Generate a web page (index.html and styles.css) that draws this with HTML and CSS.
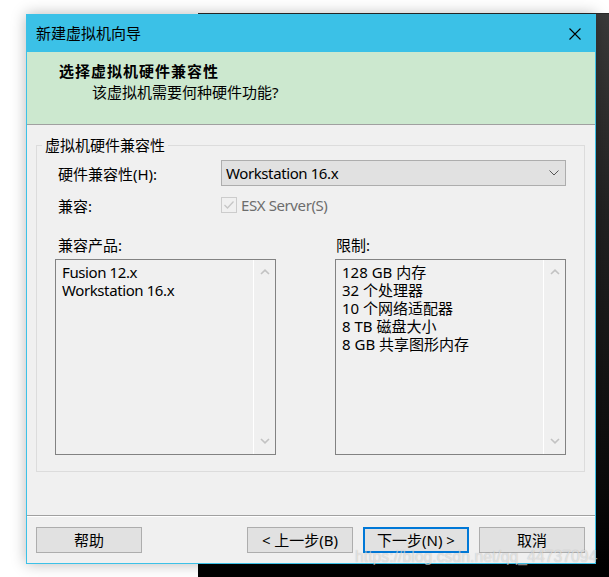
FILE: index.html
```html
<!DOCTYPE html>
<html lang="zh-CN">
<head>
<meta charset="utf-8">
<title>新建虚拟机向导</title>
<link rel="stylesheet" href="styles.css">
</head>
<body>
<div class="desk-window"></div>
<div class="dialog">
  <div class="titlebar">
    <span class="title">新建虚拟机向导</span>
    <svg class="close" width="12" height="12" viewBox="0 0 12 12"><path d="M0.5 0.5 L11.5 11.5 M11.5 0.5 L0.5 11.5" stroke="#000" stroke-width="1.1" fill="none"/></svg>
  </div>
  <div class="header">
    <div class="heading">选择虚拟机硬件兼容性</div>
    <div class="subheading">该虚拟机需要何种硬件功能?</div>
  </div>
  <div class="content">
    <fieldset class="group">
      <legend>虚拟机硬件兼容性</legend>
      <div class="group-body">
        <div class="row row-hw">
          <span class="label">硬件兼容性(H):</span>
          <div class="combo">
            <span class="latin">Workstation 16.x</span>
            <svg class="combo-arrow" width="10" height="6" viewBox="0 0 10 6"><path d="M0.5 0.5 L5 5 L9.5 0.5" stroke="#555" stroke-width="1" fill="none"/></svg>
          </div>
        </div>
        <div class="row row-compat">
          <span class="label">兼容:</span>
          <span class="check"><svg width="14" height="14" viewBox="0 0 14 14"><path d="M2.5 7 L5.5 10 L11.5 3.5" stroke="#c6c6c6" stroke-width="1.3" fill="none"/></svg></span>
          <span class="check-label latin">ESX Server(S)</span>
        </div>
        <div class="lists">
          <div class="col">
            <div class="col-label">兼容产品:</div>
            <div class="listbox">
              <div class="items">
                <div class="latin">Fusion 12.x</div>
                <div class="latin">Workstation 16.x</div>
              </div>
              <div class="scroll">
                <svg width="10" height="6" viewBox="0 0 10 6"><path d="M1 5 L5 1.2 L9 5" stroke="#c2c2c2" stroke-width="1.6" fill="none"/></svg>
                <svg width="10" height="6" viewBox="0 0 10 6"><path d="M1 1 L5 4.8 L9 1" stroke="#c2c2c2" stroke-width="1.6" fill="none"/></svg>
              </div>
            </div>
          </div>
          <div class="col col-right">
            <div class="col-label">限制:</div>
            <div class="listbox">
              <div class="items">
                <div>128 GB 内存</div>
                <div>32 个处理器</div>
                <div>10 个网络适配器</div>
                <div>8 TB 磁盘大小</div>
                <div>8 GB 共享图形内存</div>
              </div>
              <div class="scroll">
                <svg width="10" height="6" viewBox="0 0 10 6"><path d="M1 5 L5 1.2 L9 5" stroke="#c2c2c2" stroke-width="1.6" fill="none"/></svg>
                <svg width="10" height="6" viewBox="0 0 10 6"><path d="M1 1 L5 4.8 L9 1" stroke="#c2c2c2" stroke-width="1.6" fill="none"/></svg>
              </div>
            </div>
          </div>
        </div>
      </div>
    </fieldset>
  </div>
  <div class="footer">
    <button class="btn btn-help">帮助</button>
    <button class="btn">&lt; 上一步(B)</button>
    <button class="btn btn-default">下一步(N) &gt;</button>
    <button class="btn">取消</button>
  </div>
</div>
<div class="watermark">https://blog.csdn.net/qq_44737094</div>
</body>
</html>
```

FILE: styles.css
```css
html, body {
  margin: 0;
  padding: 0;
}
body {
  width: 609px;
  height: 577px;
  overflow: hidden;
  position: relative;
  background: #ffffff;
  font-family: "Noto Sans", "Noto Sans CJK SC", sans-serif;
  font-size: 15px;
  color: #000;
}
.latin {
  letter-spacing: -0.4px;
}
.desk-window {
  position: absolute;
  left: 198px;
  top: 13px;
  right: 0;
  bottom: 0;
  background: linear-gradient(#3a3a3a, #222 35%, #0a0a0a 85%, #000);
  border-top: 1px solid #2a2a2a;
}
.dialog {
  position: absolute;
  left: 26px;
  top: 14px;
  width: 570px;
  height: 550px;
  box-sizing: border-box;
  border: 1px solid #3bc1e7;
  background: #f0f0f0;
  display: flex;
  flex-direction: column;
  box-shadow: 0 0 14px rgba(0, 0, 0, 0.28);
}
.titlebar {
  height: 37px;
  flex: none;
  background: #3bc1e7;
  display: flex;
  align-items: center;
  justify-content: space-between;
  padding: 0 14px 0 9px;
}
.title {
  line-height: 37px;
}
.close {
  display: block;
}
.header {
  height: 72px;
  flex: none;
  box-sizing: border-box;
  background: #cce8cf;
  padding-top: 9px;
}
.heading {
  font-weight: bold;
  letter-spacing: 1px;
  line-height: 20px;
  padding-left: 32px;
}
.subheading {
  line-height: 20px;
  margin-top: 1px;
  padding-left: 65px;
}
.content {
  flex: 1;
  border-top: 1px solid #a0a0a0;
  padding: 10px 10px 0 9px;
}
.group {
  margin: 0;
  padding: 0;
  border: 1px solid #dcdcdc;
  min-width: 0;
}
.group legend {
  margin-left: 5px;
  padding: 0 3px;
  line-height: 20px;
}
.group-body {
  padding: 0 0 16px 18px;
}
.row {
  display: flex;
  align-items: center;
}
.label {
  width: 166px;
  box-sizing: border-box;
  padding-left: 3px;
  flex: none;
}
.row-hw {
  margin-top: 5px;
  height: 26px;
}
.combo {
  width: 345px;
  height: 26px;
  box-sizing: border-box;
  border: 1px solid #adadad;
  background: #e1e1e1;
  display: flex;
  align-items: center;
  justify-content: space-between;
  padding: 0 6px 0 4px;
}
.combo-arrow {
  display: block;
}
.row-compat {
  margin-top: 9px;
  height: 20px;
}
.check {
  width: 16px;
  height: 16px;
  box-sizing: border-box;
  border: 1px solid #cccccc;
  display: flex;
  align-items: center;
  justify-content: center;
}
.check svg {
  display: block;
}
.check-label {
  margin-left: 4px;
  color: #6d6d6d;
}
.lists {
  margin-top: 20px;
  display: grid;
  grid-template-columns: 221px 231px;
  column-gap: 59px;
}
.col-label {
  line-height: 20px;
  padding-left: 3px;
}
.col-right .col-label {
  padding-left: 1px;
}
.listbox {
  margin-top: 4px;
  height: 196px;
  box-sizing: border-box;
  border: 1px solid #828282;
  display: flex;
}
.items {
  flex: 1;
  padding: 3px 6px;
  line-height: 18px;
}
.scroll {
  width: 22px;
  flex: none;
  box-sizing: border-box;
  border-left: 1px solid #ffffff;
  display: flex;
  flex-direction: column;
  align-items: center;
  justify-content: space-between;
  padding: 9px 0 10px;
}
.scroll svg {
  display: block;
}
.footer {
  height: 48px;
  flex: none;
  box-sizing: border-box;
  border-top: 1px solid #a0a0a0;
  box-shadow: inset 0 1px 0 #ffffff;
  display: flex;
  gap: 10px;
  padding: 11px 10px 0 9px;
}
.btn {
  width: 106px;
  height: 26px;
  box-sizing: border-box;
  border: 1px solid #adadad;
  background: #e1e1e1;
  font-family: "Noto Sans", "Noto Sans CJK SC", sans-serif;
  font-size: 15px;
  color: #000;
  padding: 0;
  margin: 0;
  line-height: 22px;
}
.btn-help {
  margin-right: auto;
}
.btn-default {
  border: 2px solid #0078d7;
}
.watermark {
  position: absolute;
  left: 355px;
  top: 547px;
  font-family: "Liberation Sans", sans-serif;
  font-size: 15.8px;
  line-height: 20px;
  color: rgba(255, 255, 255, 0.55);
  text-shadow: 0 0 1px rgba(0, 0, 0, 0.25);
  white-space: nowrap;
}
```
